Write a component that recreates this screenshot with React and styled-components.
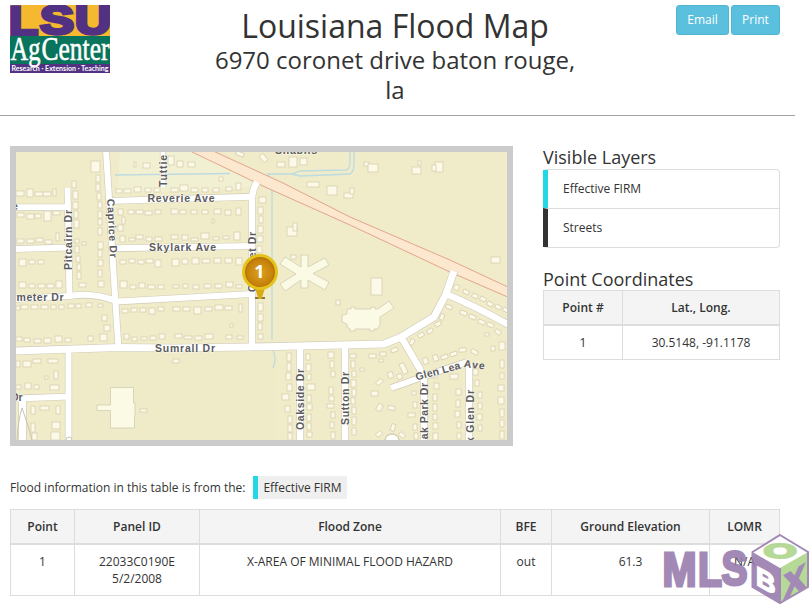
import React from 'react'
import styled, { createGlobalStyle } from 'styled-components'

const GlobalStyle = createGlobalStyle`
  * {
    box-sizing: border-box;
  }
  body {
    margin: 0;
    background: #fff;
    color: #333;
    font-family: "Open Sans", sans-serif;
    font-size: 12px;
    line-height: 17px;
  }
`

const Page = styled.div`
  position: relative;
  width: 811px;
  height: 607px;
  overflow: hidden;
`

const Header = styled.header`
  display: grid;
  grid-template-columns: 190px 390px 190px;
  width: 795px;
  height: 116px;
  padding: 5px 15px 0 10px;
  border-bottom: 1px solid #a3a3a6;
`

const Titles = styled.div`
  text-align: center;
`

const Title = styled.h1`
  margin: 4px 0 0;
  font-size: 32px;
  line-height: 34px;
  font-weight: 400;
`

const Address = styled.h2`
  margin: 2px 0 0;
  padding: 0 10px;
  font-size: 24px;
  line-height: 30px;
  font-weight: 400;
`

const Actions = styled.div`
  display: flex;
  justify-content: flex-end;
  gap: 2px;
`

const Button = styled.button`
  width: ${(props) => props.$width}px;
  height: 30px;
  padding: 0 0 1px;
  border: 1px solid #4fb6d3;
  border-radius: 3px;
  background: #5bc0de;
  color: #fff;
  font: 12px "Open Sans", sans-serif;
`

const Main = styled.main`
  display: grid;
  grid-template-columns: 503px 237px;
  column-gap: 30px;
  padding: 30px 0 0 10px;
`

const MapFrame = styled.div`
  height: 300px;
  border: 6px solid #cbcbcb;

  svg {
    display: block;
  }
`

const PanelTitle = styled.h3`
  margin: ${(props) => props.$top}px 0 0;
  font-size: 18px;
  line-height: 22px;
  font-weight: 400;
`

const LayerList = styled.ul`
  margin: 1px 0 0;
  padding: 0;
  list-style: none;
  border: 1px solid #ddd;
  border-left: 0;
  border-radius: 4px;
`

const Layer = styled.li`
  height: ${(props) => props.$height}px;
  padding: 10px 15px;
  border-left: 5px solid ${(props) => props.$color};

  & + & {
    border-top: 1px solid #ddd;
  }
`

const Table = styled.table`
  width: ${(props) => props.$width}px;
  border-collapse: collapse;
  table-layout: fixed;
  text-align: center;
`

const Th = styled.th`
  width: ${(props) => props.$width}px;
  height: 34px;
  padding: 0;
  border: 1px solid #ddd;
  border-bottom-width: 2px;
  background: #f4f4f4;
  font-weight: 600;
`

const Td = styled.td`
  height: ${(props) => props.$height}px;
  padding: 8px 0;
  border: 1px solid #ddd;
  vertical-align: top;
`

const FloodInfo = styled.section`
  padding: 30px 0 0 10px;
`

const Source = styled.p`
  display: flex;
  align-items: center;
  gap: 8px;
  height: 23px;
  margin: 0 0 10px;
  white-space: nowrap;
`

const SourceTag = styled.span`
  height: 23px;
  padding: 3px 5px;
  border-left: 5px solid #22d8e4;
  background: #efefef;
`

const Watermark = styled.svg`
  position: absolute;
  left: 661px;
  top: 532px;
`

// x, y, width, height
const houses = [
  [16, 191, 8, 5], [27, 189, 6, 8], [35, 192, 8, 4], [43, 192, 8, 4], [53, 189, 3, 7],
  [17, 213, 7, 4], [27, 214, 7, 5], [35, 214, 6, 4], [44, 211, 7, 10], [53, 211, 7, 4],
  [17, 239, 7, 4], [27, 239, 7, 4], [36, 238, 7, 4], [45, 240, 7, 4], [56, 233, 3, 8],
  [19, 259, 7, 7], [29, 260, 6, 4], [38, 260, 6, 4],
  [19, 282, 7, 6], [29, 284, 6, 4], [38, 284, 7, 4], [47, 284, 7, 4], [56, 281, 6, 7],
  [72, 181, 4, 7], [73, 191, 5, 8], [73, 202, 5, 7], [74, 211, 4, 7], [74, 220, 5, 8],
  [75, 239, 4, 4], [82, 242, 4, 3], [75, 246, 4, 7], [76, 256, 4, 6], [77, 264, 4, 6],
  [77, 272, 4, 7], [79, 283, 7, 4],
  [91, 161, 9, 11], [96, 175, 4, 7], [96, 184, 4, 7], [97, 193, 4, 7], [98, 202, 4, 6],
  [98, 211, 4, 7], [98, 219, 4, 6], [98, 228, 4, 7], [98, 242, 5, 7], [98, 250, 4, 7],
  [98, 260, 5, 6], [98, 270, 4, 7], [98, 281, 6, 6],
  [134, 162, 2, 5], [143, 163, 7, 5], [168, 156, 6, 9], [177, 161, 6, 6], [188, 162, 7, 5],
  [116, 189, 6, 4], [124, 189, 7, 4], [134, 187, 7, 5], [145, 188, 6, 4], [154, 188, 6, 4],
  [171, 188, 7, 4], [180, 185, 8, 6], [191, 188, 7, 4], [202, 188, 6, 4], [213, 188, 6, 4],
  [226, 187, 6, 4], [236, 183, 5, 7], [219, 177, 4, 4],
  [118, 209, 5, 6], [128, 210, 6, 4], [136, 210, 7, 4], [145, 211, 7, 4], [155, 210, 6, 4],
  [171, 209, 7, 5], [180, 210, 6, 4], [191, 210, 6, 4], [202, 210, 6, 4], [214, 209, 7, 5],
  [225, 210, 6, 5], [236, 208, 5, 7], [212, 219, 2, 4], [122, 217, 3, 7], [118, 225, 5, 6],
  [120, 236, 5, 6], [129, 238, 6, 3], [136, 235, 7, 4], [146, 237, 6, 4], [155, 237, 7, 4],
  [171, 235, 7, 4], [182, 235, 6, 5], [191, 238, 7, 3], [201, 233, 8, 6], [213, 237, 6, 3],
  [223, 236, 6, 3], [234, 232, 6, 8],
  [120, 260, 6, 4], [129, 259, 6, 4], [138, 260, 6, 4], [146, 259, 7, 4], [155, 260, 6, 7],
  [172, 259, 7, 7], [182, 259, 6, 5], [192, 258, 7, 6], [202, 259, 8, 4], [214, 258, 7, 5],
  [225, 258, 7, 5], [236, 258, 6, 7],
  [120, 281, 7, 7], [130, 285, 6, 4], [139, 283, 6, 5], [148, 285, 7, 4], [158, 285, 6, 4],
  [173, 285, 6, 3], [183, 284, 5, 4], [193, 285, 6, 4], [204, 284, 7, 4], [215, 284, 7, 4],
  [226, 282, 7, 5], [236, 285, 6, 3],
  [259, 197, 7, 6], [258, 207, 5, 7], [259, 216, 4, 7], [258, 226, 5, 7], [257, 236, 6, 6],
  [257, 246, 5, 7], [277, 162, 8, 5], [289, 157, 8, 10],
  [300, 158, 7, 7], [307, 182, 12, 5], [327, 186, 10, 9], [344, 193, 9, 5],
  [350, 188, 4, 6], [364, 162, 5, 4], [368, 164, 10, 8], [412, 167, 9, 7], [418, 161, 3, 4],
  [435, 162, 8, 10], [432, 165, 4, 6], [287, 227, 10, 9], [293, 223, 4, 8], [491, 257, 9, 6],
  [371, 278, 11, 17], [291, 255, 5, 4], [336, 300, 4, 5],
  [16, 306, 4, 4], [21, 305, 7, 4], [31, 305, 7, 4], [41, 305, 7, 4], [51, 305, 5, 4],
  [59, 305, 5, 4], [68, 304, 6, 4], [76, 304, 5, 4], [86, 303, 6, 4], [98, 304, 5, 3],
  [102, 315, 5, 6], [104, 325, 6, 6], [100, 334, 7, 7], [88, 336, 5, 5],
  [16, 337, 6, 4], [24, 338, 6, 4], [34, 339, 7, 4], [44, 338, 7, 5], [55, 336, 7, 6], [65, 338, 6, 4],
  [122, 309, 6, 4], [131, 308, 6, 4], [140, 308, 6, 4], [149, 308, 6, 6], [158, 307, 6, 4],
  [173, 307, 7, 4], [183, 307, 7, 4], [194, 307, 7, 7], [205, 307, 7, 4], [215, 305, 8, 5],
  [225, 306, 7, 4], [239, 304, 3, 8], [124, 334, 5, 5], [132, 337, 5, 4], [141, 337, 6, 3],
  [150, 336, 6, 4], [159, 334, 6, 5], [175, 334, 7, 4], [184, 336, 8, 3], [195, 336, 7, 4],
  [205, 334, 8, 5], [226, 335, 6, 4], [237, 336, 6, 3], [230, 324, 3, 3],
  [258, 303, 5, 8], [258, 314, 5, 7], [258, 323, 4, 7], [258, 334, 5, 5],
  [16, 361, 4, 6], [23, 361, 8, 6], [33, 359, 8, 4], [48, 359, 10, 4], [54, 371, 4, 8], [45, 376, 3, 3],
  [16, 385, 5, 4], [25, 383, 6, 6], [34, 385, 5, 4], [50, 385, 9, 5],
  [31, 406, 4, 8], [40, 406, 9, 4], [56, 406, 4, 8], [31, 423, 4, 9], [32, 433, 5, 7],
  [52, 422, 8, 7], [51, 432, 9, 8], [173, 359, 6, 4], [140, 409, 7, 3],
  [287, 353, 4, 8], [287, 363, 4, 8], [286, 373, 5, 7], [287, 384, 5, 7], [282, 394, 7, 6],
  [285, 406, 5, 6], [288, 416, 4, 7], [288, 425, 4, 7], [288, 433, 4, 7],
  [306, 354, 4, 6], [306, 364, 5, 7], [307, 374, 4, 6], [307, 384, 8, 6], [307, 395, 4, 7],
  [307, 404, 5, 6], [307, 414, 4, 7], [307, 423, 4, 7], [307, 432, 5, 5],
  [328, 352, 6, 6], [330, 361, 4, 7], [331, 371, 4, 6], [329, 387, 4, 7], [329, 396, 5, 5],
  [327, 404, 7, 4], [331, 412, 4, 6], [330, 422, 4, 6], [331, 432, 4, 7],
  [350, 354, 6, 4], [351, 361, 4, 7], [352, 371, 4, 6], [351, 380, 5, 7], [352, 389, 4, 7],
  [351, 398, 4, 6], [352, 407, 4, 7], [352, 417, 4, 8], [352, 428, 4, 7],
  [369, 354, 7, 4], [380, 352, 6, 4], [379, 359, 4, 3], [360, 368, 4, 3], [371, 391, 7, 5],
  [433, 372, 4, 6], [434, 383, 5, 6], [433, 394, 4, 7], [433, 404, 4, 7], [433, 414, 4, 6],
  [433, 423, 5, 6], [433, 433, 5, 7], [412, 391, 4, 4], [413, 402, 4, 6], [408, 413, 7, 4],
  [413, 424, 4, 6], [414, 433, 4, 6],
  [450, 374, 8, 5], [456, 389, 5, 6], [456, 400, 4, 7], [455, 411, 5, 6], [457, 422, 4, 6], [457, 433, 4, 6],
  [473, 369, 5, 6], [475, 380, 4, 6], [478, 392, 4, 6], [478, 403, 4, 6], [477, 414, 5, 6], [478, 425, 4, 6],
  [499, 342, 6, 8], [491, 346, 4, 5], [500, 360, 4, 8], [500, 373, 4, 6], [498, 385, 6, 6],
  [498, 397, 6, 7], [500, 409, 4, 8], [500, 420, 4, 7], [500, 431, 4, 8], [485, 333, 4, 3]
]

// x, y, width, height, angle
const turnedHouses = [
  [410, 339, 4, 6, 30], [418, 333, 6, 4, -30], [427, 329, 6, 4, -30], [435, 322, 6, 4, -30],
  [440, 314, 4, 6, 25], [446, 305, 6, 4, 20], [401, 363, 5, 11, -25], [388, 372, 5, 6, -20],
  [397, 374, 5, 5, -20], [423, 358, 5, 6, -20], [433, 355, 5, 6, -20], [441, 355, 7, 4, -18],
  [450, 352, 7, 4, -18], [459, 348, 7, 4, -5], [471, 350, 7, 4, 28], [391, 348, 7, 4, -20],
  [376, 380, 7, 4, -38], [377, 404, 5, 7, 30], [388, 406, 7, 4, 10], [391, 424, 4, 7, 15],
  [376, 432, 6, 4, -40], [399, 433, 6, 4, 40],
  [460, 311, 7, 4, 22], [469, 315, 7, 4, 22], [478, 320, 7, 4, 22], [487, 323, 7, 4, 22], [495, 330, 6, 4, 35],
  [454, 285, 5, 5, 25], [463, 290, 6, 4, 25], [472, 294, 6, 4, 25], [480, 297, 6, 4, 25],
  [487, 302, 6, 4, 25], [495, 305, 6, 4, 25], [503, 308, 6, 4, 25],
  [261, 154, 5, 8, -40], [236, 152, 8, 4, 20]
]

const streets = [
  { d: 'M106 150 L107.5 174 L115 296 L118.5 348', width: 6 },
  { d: 'M67.5 188 L69.5 296', width: 6 },
  { d: 'M14 207.3 H68', width: 6 },
  { d: 'M14 249 L70 247.5', width: 6 },
  { d: 'M109 201 L252 196.7', width: 6 },
  { d: 'M163 150 V187', width: 5 },
  { d: 'M112 248.3 L252 246', width: 6 },
  { d: 'M14 299 L70 296 Q94 292 117 301.5 L252 294', width: 6 },
  { d: 'M257 182 Q252 190 252 200 L252 346', width: 6.5 },
  { d: 'M14 351 L118 347.5 L175 348 L250 347 L384 344 L401 337 L434 317 L446 294 L454 271', width: 7 },
  { d: 'M446 294 Q475 306 509 325', width: 6.5 },
  { d: 'M401 337 L420 369 L424 380 V442', width: 6.5 },
  { d: 'M391 388 Q430 374 467 362', width: 6 },
  { d: 'M469 364 V442', width: 6.5 },
  { d: 'M68.5 350 V442', width: 6 },
  { d: 'M14 398.5 L70 396.5', width: 6 },
  { d: 'M22.5 398 V442', width: 7 },
  { d: 'M300 347 V442', width: 6.5 },
  { d: 'M345 347 V442', width: 6.5 }
]

const labels = [
  { text: 'Reverie Ave', x: 147.5, y: 202, length: 67 },
  { text: 'Skylark Ave', x: 149, y: 250.5, length: 67 },
  { text: 'meter Dr', x: 16.5, y: 301, length: 47 },
  { text: 'Sumrall Dr', x: 155, y: 352, length: 60 },
  { text: 'Pitcairn Dr', x: 72, y: 270, length: 60, angle: -90 },
  { text: 'Caprice Dr', x: 107, y: 199, length: 59, angle: 87 },
  { text: 'Tuttie', x: 166.5, y: 187, length: 32, angle: -90 },
  { text: 'Coronet Dr', x: 255.5, y: 292, length: 60, angle: -90 },
  { text: 'Oakside Dr', x: 304, y: 430, length: 61, angle: -90 },
  { text: 'Sutton Dr', x: 348.5, y: 425, length: 53, angle: -90 },
  { text: 'Oak Park Dr', x: 427.5, y: 448, length: 65, angle: -90 },
  { text: 'k Glen Dr', x: 473.5, y: 443, length: 53, angle: -90 },
  { text: 'Shablis', x: 275, y: 153.5, length: 42 },
  { text: 'e', x: 12, y: 210, length: 6 },
  { text: 'Dr', x: 11, y: 401, length: 11.5 },
  { text: 'Glen Lea', x: 416.5, y: 380.5, length: 46, angle: -15 },
  { text: 'Ave', x: 463.5, y: 367, length: 21, angle: 7 }
]

const FloodMap = () => (
  <svg width="491" height="288" viewBox="16 152 491 288">
    <defs>
      <radialGradient id="pin">
        <stop offset="0" stopColor="#dba21f" />
        <stop offset="1" stopColor="#c57f0b" />
      </radialGradient>
    </defs>
    <rect x="16" y="152" width="491" height="288" fill="#f0ebc9" />
    <path d="M120 152 H205 L260 181 V187 L118 194Z" fill="#f2f0d2" />
    <path d="M70 350 H274 V440 H72Z" fill="#efeac7" />

    <g fill="none" stroke="#bddbe0" strokeWidth="1.3">
      <path d="M115 175 L230 173.5 M267 174 L292 174 L300 171 L346 170 Q350 169 350 163 L350 152" />
      <path d="M292 174 L300 176 L350 174 Q354 172 354 163 V152" />
      <path d="M267 174 L276 183 M272 180 V340 M273 350 Q277 359 273 368" />
    </g>

    <g fill="#fcf9e8" stroke="#d8cfb0" strokeWidth="0.8">
      {houses.map(([x, y, w, h], i) => (
        <rect key={i} x={x} y={y} width={w} height={h} />
      ))}
      {turnedHouses.map(([x, y, w, h, angle], i) => (
        <rect key={i} x={x} y={y} width={w} height={h} transform={`rotate(${angle} ${x + w / 2} ${y + h / 2})`} />
      ))}
    </g>

    <g fill="#fafae5" stroke="#d2cdb4" strokeWidth="0.8">
      <path d="M110.5 387.5 H133.5 V403 H135 V416 H134.5 V428 H110.5 V410.5 H97 V405 H110.5Z" />
      <path d="M347 309 H351 V307 H355 V309 H371 V307 H375 V309 L378 309 L389 301 L394 308 L380 317 L380 324 L378 329 H374 V331 H370 V329 H355 V331 H350 V329 L347 327 V324 L342 322 V315 L347 314Z" />
      <path d="M301 255 H308 V267 L325 258 L329 265 L313 273.5 L329 282 L325 290 L308 280 V288 H301 V280 L285 291 L280 284 L296 274 L280 264 L285 257 L301 267Z" />
    </g>

    <path d="M188 150 L211 150 L283 183 L350 217 L450 260 L510 288 V298 L450 272 L350 225 L265 187Z" fill="#fce8cf" />
    <path d="M211 150 L283 183 L350 217 L450 260 L510 288 M188 150 L265 187 L350 225 L450 272 L510 298" fill="none" stroke="#e3a48d" strokeWidth="1" />

    <g fill="none" stroke="#cfcab7">
      {streets.map(({ d, width }) => (
        <path key={d} d={d} strokeWidth={width + 1.2} />
      ))}
    </g>
    <g fill="none" stroke="#fff">
      {streets.map(({ d, width }) => (
        <path key={d} d={d} strokeWidth={width} />
      ))}
    </g>
    <path d="M22 408 Q18 420 17 440 M22 408 Q28 424 32 440 M66 440 A3 3 0 0 1 72 440 M385 440 A7 6 0 0 1 399 440" fill="none" stroke="#c9c4b2" />
    <path d="M386 440 A6 5 0 0 1 398 440Z" fill="#fff" />

    <g fill="#5c5c5c" fontFamily="Liberation Sans, sans-serif" fontSize="10.5" fontWeight="bold" stroke="#fff" strokeWidth="1.6" strokeOpacity="0.5" paintOrder="stroke">
      {labels.map(({ text, x, y, length, angle = 0 }) => (
        <text key={text} x={x} y={y} textLength={length} transform={`rotate(${angle} ${x} ${y})`}>{text}</text>
      ))}
    </g>

    <path d="M255 298 H265" stroke="#8c7436" strokeWidth="2" />
    <path d="M254 285 L258.5 299 H261.5 L266 285Z" fill="#d9aa12" />
    <circle cx="260" cy="272" r="18" fill="#e5c21b" />
    <circle cx="260" cy="272" r="15" fill="#b87508" />
    <circle cx="260" cy="272.5" r="13.5" fill="url(#pin)" />
    <text x="259.5" y="278" fill="#fff" fontFamily="Open Sans, sans-serif" fontSize="18" fontWeight="700" textAnchor="middle">1</text>
  </svg>
)

const Logo = () => (
  <svg width="100" height="68" viewBox="0 0 100 68">
    <rect width="100" height="31" fill="#f5b92f" />
    <g fill="#523183" stroke="#523183" strokeWidth="3.4" fontFamily="Liberation Sans, sans-serif" fontWeight="bold" fontSize="41">
      <text x="-1" y="29.5" textLength="29" lengthAdjust="spacingAndGlyphs">L</text>
      <text x="30" y="29" textLength="34" lengthAdjust="spacingAndGlyphs">S</text>
      <text x="65" y="29" textLength="36" lengthAdjust="spacingAndGlyphs">U</text>
    </g>
    <rect y="31" width="100" height="28" fill="#08745b" />
    <rect y="59" width="100" height="9" fill="#523183" />
    <g fill="#fff" stroke="#fff" strokeWidth="0.6" fontFamily="Liberation Serif, serif" fontSize="34">
      <text x="0.5" y="54.5" textLength="30" lengthAdjust="spacingAndGlyphs">Ag</text>
      <text x="31.5" y="54.5" textLength="68" lengthAdjust="spacingAndGlyphs">Center</text>
    </g>
    <text x="1.5" y="65.6" fill="#fff" fontFamily="Lato, sans-serif" fontWeight="bold" fontSize="7.6" textLength="97" lengthAdjust="spacingAndGlyphs">Research · Extension · Teaching</text>
  </svg>
)

const MlsBox = () => (
  <Watermark width="150" height="75" viewBox="661 532 150 75">
    <g opacity="0.88">
      <g fill="#977bac" stroke="#977bac" strokeWidth="3" fontFamily="Liberation Sans, sans-serif" fontWeight="bold" fontSize="49">
        <text x="662.5" y="585.5" textLength="34" lengthAdjust="spacingAndGlyphs">M</text>
        <text x="698" y="585.5" textLength="24" lengthAdjust="spacingAndGlyphs">L</text>
        <text x="721.5" y="585" textLength="26" lengthAdjust="spacingAndGlyphs">S</text>
      </g>
      <path d="M780 535 L808 552 V587 L780 603 L752.5 587 V552Z" fill="#fff" />
      <path d="M752.5 552 L780 568 V603 L752.5 587Z" fill="#977bac" />
      <path d="M780 568 L808 552 V587 L780 603Z" fill="#acd48a" />
      <path d="M780 535 L808 552 V587 L780 603 L752.5 587 V552Z M780 568 V603" fill="none" stroke="#977bac" strokeWidth="2" />
      <g fontFamily="Liberation Sans, sans-serif" fontWeight="bold">
        <text transform="translate(763.4 559.3) scale(1.85 .98)" fontSize="21" textLength="18" lengthAdjust="spacingAndGlyphs" fill="#acd48a" stroke="#acd48a" strokeWidth="1.8" y="-1">O</text>
        <text transform="matrix(1 .55 0 1 756 584.5)" fontSize="27" fill="#fff" stroke="#fff" strokeWidth="1.6">B</text>
        <text transform="matrix(1 -.58 0 1 784.5 598.5)" fontSize="33" textLength="20" lengthAdjust="spacingAndGlyphs" fill="#977bac" stroke="#977bac" strokeWidth="2.5">X</text>
      </g>
    </g>
  </Watermark>
)

const App = () => {
  return (
    <>
      <GlobalStyle />
      <Page>
        <Header>
          <Logo />
          <Titles>
            <Title>Louisiana Flood Map</Title>
            <Address>6970 coronet drive baton rouge, la</Address>
          </Titles>
          <Actions>
            <Button $width={53}>Email</Button>
            <Button $width={49}>Print</Button>
          </Actions>
        </Header>
        <Main>
          <MapFrame>
            <FloodMap />
          </MapFrame>
          <aside>
            <PanelTitle $top={0}>Visible Layers</PanelTitle>
            <LayerList>
              <Layer $color="#22d8e4" $height={38}>Effective FIRM</Layer>
              <Layer $color="#333" $height={39}>Streets</Layer>
            </LayerList>
            <PanelTitle $top={20}>Point Coordinates</PanelTitle>
            <Table $width={237}>
              <thead>
                <tr>
                  <Th $width={79}>Point #</Th>
                  <Th>Lat., Long.</Th>
                </tr>
              </thead>
              <tbody>
                <tr>
                  <Td $height={34}>1</Td>
                  <Td>30.5148, -91.1178</Td>
                </tr>
              </tbody>
            </Table>
          </aside>
        </Main>
        <FloodInfo>
          <Source>
            Flood information in this table is from the:
            <SourceTag>Effective FIRM</SourceTag>
          </Source>
          <Table $width={770}>
            <thead>
              <tr>
                <Th $width={64}>Point</Th>
                <Th $width={125}>Panel ID</Th>
                <Th $width={301}>Flood Zone</Th>
                <Th $width={51}>BFE</Th>
                <Th $width={158}>Ground Elevation</Th>
                <Th>LOMR</Th>
              </tr>
            </thead>
            <tbody>
              <tr>
                <Td $height={51}>1</Td>
                <Td>22033C0190E<br />5/2/2008</Td>
                <Td>X-AREA OF MINIMAL FLOOD HAZARD</Td>
                <Td>out</Td>
                <Td>61.3</Td>
                <Td>N/A</Td>
              </tr>
            </tbody>
          </Table>
        </FloodInfo>
        <MlsBox />
      </Page>
    </>
  )
}

export default App
